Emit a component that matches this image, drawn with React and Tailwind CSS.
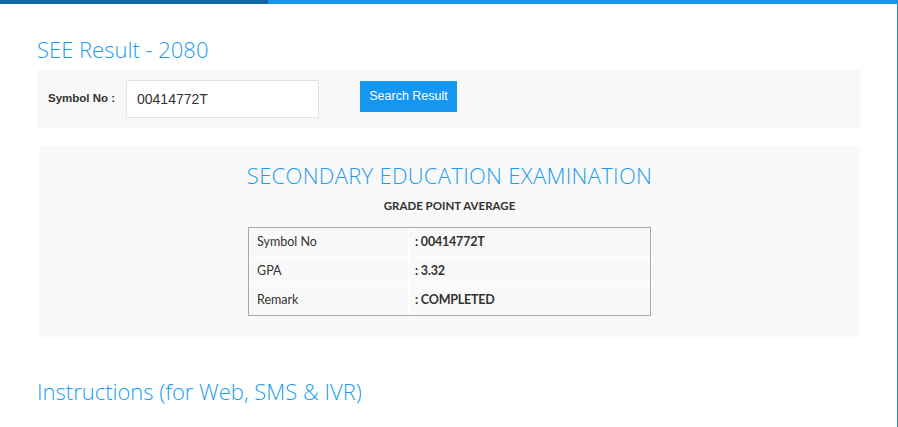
export default function App() {
  const rows = [
    ["Symbol No", ": 00414772T"],
    ["GPA", ": 3.32"],
    ["Remark", ": COMPLETED"],
  ];
  const gothic = { fontFamily: "'Open Sans', 'DejaVu Sans', sans-serif", fontWeight: 300 };
  return (
    <div className="w-[898px] h-[427px] bg-white overflow-hidden" style={{ fontFamily: "'Liberation Sans', Arial, sans-serif" }}>
      <div className="flex h-[4px]">
        <div className="w-[268px] bg-[#1166a8]"></div>
        <div className="flex-1 bg-[#1597f0]"></div>
      </div>
      <div className="flex h-[423px]">
        <div className="flex-1 pl-[37px] pr-[37px]">
          <h1 className="mt-[32px] text-[22px] leading-[27px] text-[#1a9cf0]" style={gothic}>
            SEE Result - 2080
          </h1>
          <div className="mt-[7px] bg-[#f8f8f8] h-[58px] flex items-start">
            <div className="flex items-center h-[58px] pl-[11px] w-[89px]">
              <span className="text-[11.5px] font-bold text-[#333]">Symbol No :</span>
            </div>
            <div className="mt-[10px] w-[193px] h-[38px] bg-white border border-[#e6e4d9] flex items-center pl-[10px] text-[14px] text-[#333]">
              00414772T
            </div>
            <div className="ml-[41px] mt-[11px] w-[97px] h-[31px] bg-[#1597f0] text-white text-[12.5px] flex items-center justify-center">
              Search Result
            </div>
          </div>
          <div className="mt-[18px] ml-[2px] bg-[#f9f9f9] h-[191px] flex flex-col items-center">
            <h2 className="mt-[16px] text-[22px] leading-[27px] tracking-[0.3px] text-[#1a9cf0]" style={gothic}>
              SECONDARY EDUCATION EXAMINATION
            </h2>
            <div className="mt-[10px] text-[11.5px] leading-[14px] font-bold text-[#333]" style={{ fontFamily: "Lato, sans-serif" }}>
              GRADE POINT AVERAGE
            </div>
            <div className="mt-[14px] w-[403px] border border-[#aaa] text-[12.5px] text-[#333]" style={{ fontFamily: "Lato, sans-serif" }}>
              {rows.map(([k, v], i) => (
                <div key={i} className={`flex h-[29px] ${i < 2 ? "border-b border-white" : ""}`}>
                  <div className="w-[160px] pl-[8px] border-r border-white flex items-center">{k}</div>
                  <div className="pl-[6px] font-bold flex items-center tracking-[-0.2px]">{v}</div>
                </div>
              ))}
            </div>
          </div>
          <h2 className="mt-[41px] text-[22px] leading-[27px] text-[#1a9cf0]" style={gothic}>
            Instructions (for Web, SMS &amp; IVR)
          </h2>
        </div>
        <div className="w-[1px] bg-[#2a8ab8]"></div>
      </div>
    </div>
  );
}
